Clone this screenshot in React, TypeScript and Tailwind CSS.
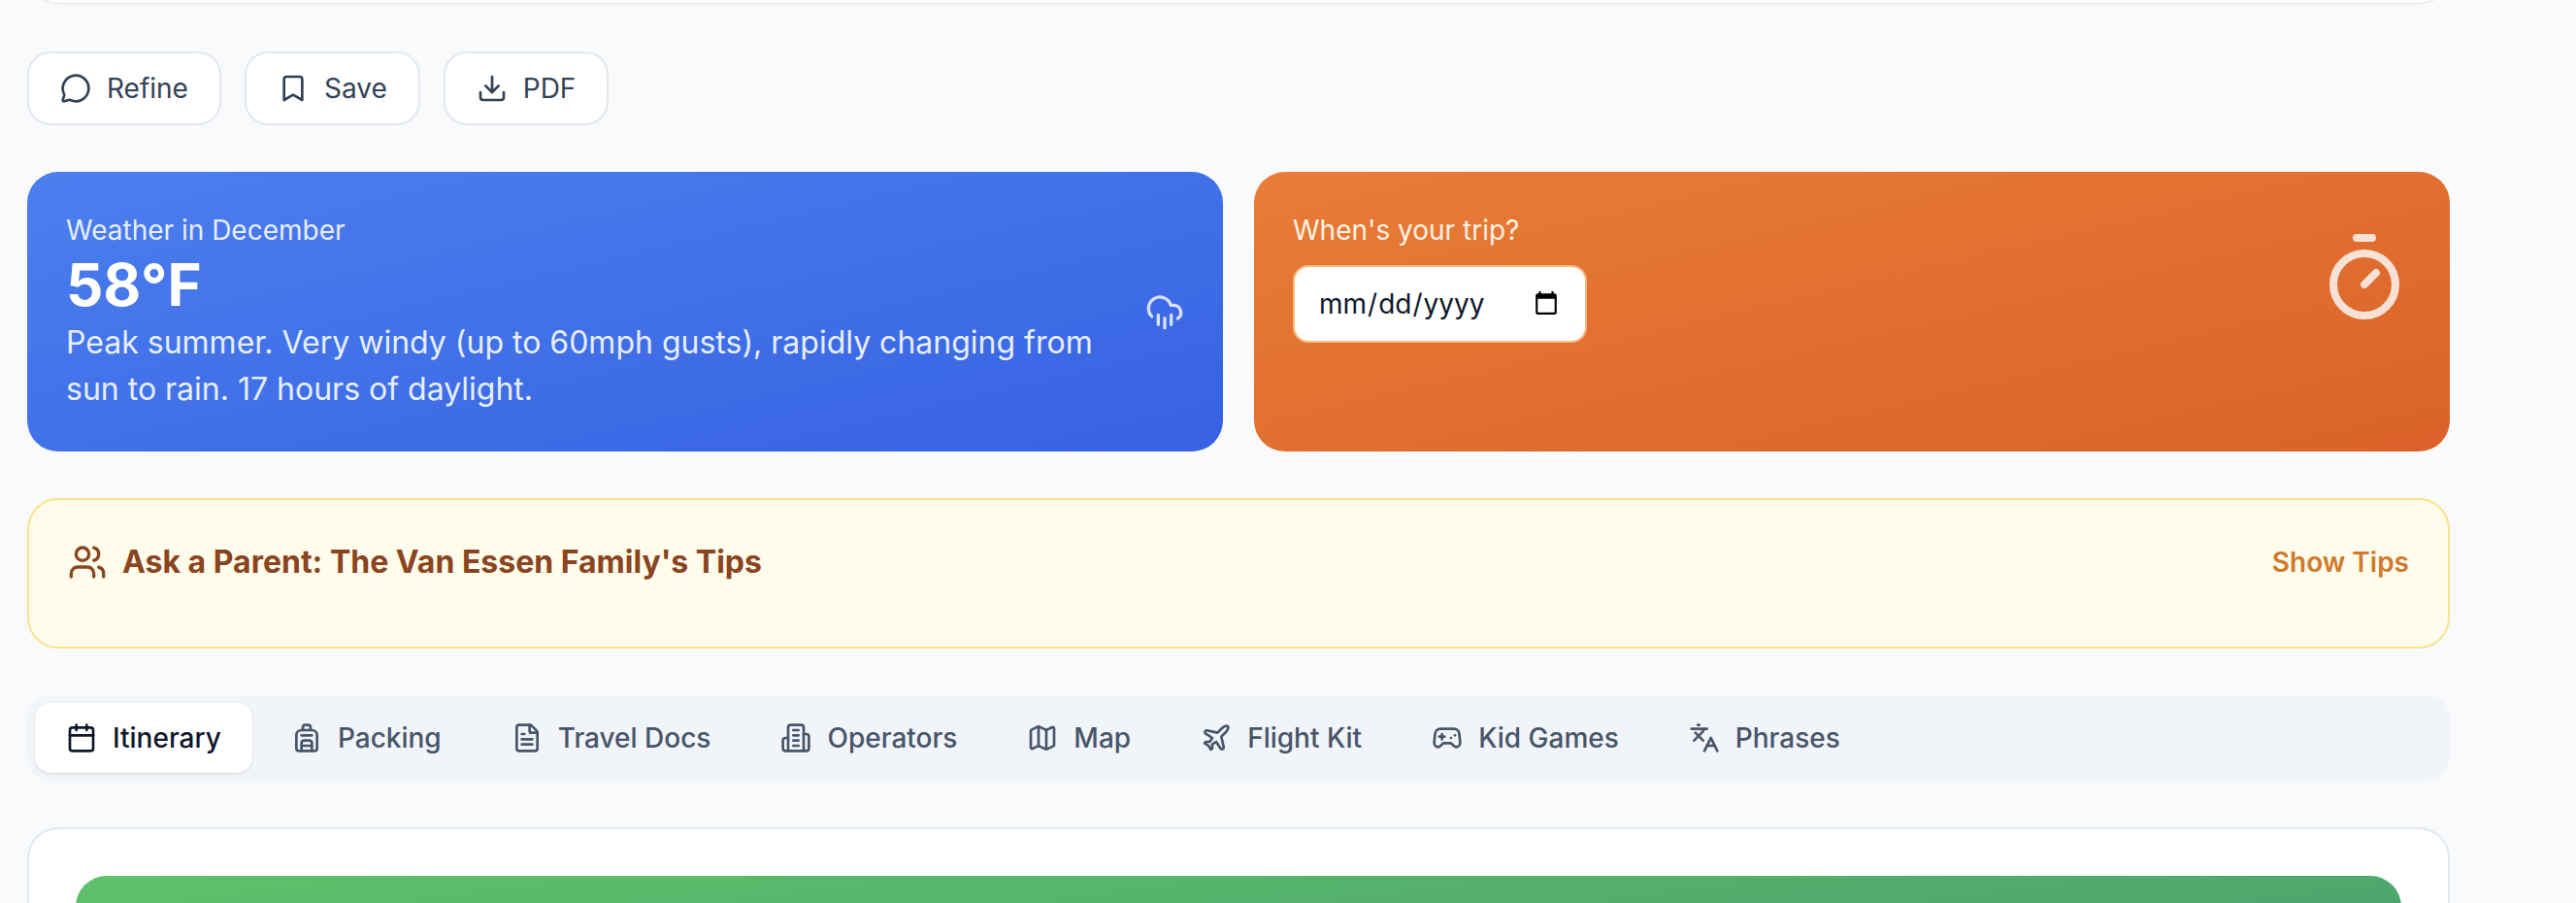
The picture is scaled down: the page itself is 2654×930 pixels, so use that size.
import { Backpack, Bookmark, Calendar, CloudRain, Download, FileText, Gamepad2, Languages, Map, MessageCircle, Plane, Timer, Users } from "lucide-react";

// the tower version of the building icon, lucide's current one is squatter
const Operators = ({ size }: { size: number }) => (
  <svg width={size} height={size} viewBox="0 0 24 24" fill="none" stroke="currentColor" strokeWidth={2} strokeLinecap="round" strokeLinejoin="round">
    <path d="M6 22V4a2 2 0 0 1 2-2h8a2 2 0 0 1 2 2v18Z" />
    <path d="M6 12H4a2 2 0 0 0-2 2v6a2 2 0 0 0 2 2h2" />
    <path d="M18 9h2a2 2 0 0 1 2 2v9a2 2 0 0 1-2 2h-2" />
    <path d="M10 6h4" />
    <path d="M10 10h4" />
    <path d="M10 14h4" />
    <path d="M10 18h4" />
  </svg>
);

const actions = [
  { label: "Refine", icon: MessageCircle },
  { label: "Save", icon: Bookmark },
  { label: "PDF", icon: Download },
];

const tabs = [
  { label: "Itinerary", icon: Calendar },
  { label: "Packing", icon: Backpack },
  { label: "Travel Docs", icon: FileText },
  { label: "Operators", icon: Operators },
  { label: "Map", icon: Map },
  { label: "Flight Kit", icon: Plane },
  { label: "Kid Games", icon: Gamepad2 },
  { label: "Phrases", icon: Languages },
];

const App = () => {
  return (
    <div className="h-[930px] overflow-hidden bg-[#f9fafc] pl-7 font-['Inter',sans-serif]">
      <div className="flex w-[2496px] flex-col">
        {/* bottom edge of the card above, scrolled away */}
        <div className="-mx-4 h-[8px] overflow-hidden px-4">
          <div className="-mt-[77px] h-[80px] rounded-[32px] bg-white shadow-[0_1px_2px_rgba(15,23,42,0.12)]" />
        </div>

        <div className="mt-[45px] flex gap-6">
          {actions.map(({ label, icon: Icon }) => (
            <button
              key={label}
              className="flex h-[76px] items-center gap-4 rounded-3xl border-2 border-[#e2e8f0] bg-white px-8 text-[28px] text-[#334155]"
            >
              <Icon size={32} strokeWidth={2} />
              {label}
            </button>
          ))}
        </div>

        <div className="mt-12 grid grid-cols-2 gap-8">
          <div className="flex items-center justify-between gap-8 rounded-[32px] bg-gradient-to-br from-[#4c7fee] to-[#3761e2] p-10 text-white">
            <div>
              <p className="text-[28px] leading-10 text-[#e6eefd]">Weather in December</p>
              <p className="text-[60px] leading-[72px] font-bold">58°F</p>
              <p className="max-w-[1120px] text-[32px] leading-12 text-[#e6eefd]">
                Peak summer. Very windy (up to 60mph gusts), rapidly changing from sun to rain. 17 hours of daylight.
              </p>
            </div>
            <CloudRain size={40} className="shrink-0 text-white/80" />
          </div>

          <div className="rounded-[32px] bg-gradient-to-br from-[#e97c36] to-[#da622a] p-10 text-white">
            <div className="flex items-center justify-between">
              <div>
                <p className="text-[28px] leading-10 text-[#fff3e3]">When's your trip?</p>
                <input
                  type="date"
                  className="mt-4 h-20 w-[303px] rounded-2xl border-2 border-[#f8bb7c] bg-white px-6 text-[28px] text-[#0f172a]"
                />
              </div>
              <Timer size={96} className="text-white/80" />
            </div>
          </div>
        </div>

        <div className="mt-12 flex h-[155px] items-start justify-between rounded-[32px] border-2 border-[#fbe28f] bg-[#fffcec] p-10">
          <div className="flex items-center gap-4">
            <Users size={40} className="text-[#8a4520]" />
            <h3 className="text-[32px] leading-12 font-bold text-[#8a4520]">Ask a Parent: The Van Essen Family's Tips</h3>
          </div>
          <button className="text-[28px] leading-12 font-semibold text-[#cf7a2d]">Show Tips</button>
        </div>

        <div className="mt-12 flex gap-2 rounded-3xl bg-[#f1f4f9] p-2">
          {tabs.map(({ label, icon: Icon }, i) => (
            <div
              key={label}
              className={
                i === 0
                  ? "flex h-[72px] items-center gap-4 rounded-2xl bg-white px-8 text-[28px] font-medium text-[#0f172a] shadow-sm"
                  : "flex h-[72px] items-center gap-4 rounded-2xl px-8 text-[28px] font-medium text-[#475569]"
              }
            >
              <Icon size={32} />
              {label}
            </div>
          ))}
        </div>

        <div className="mt-12 rounded-[32px] border-2 border-[#e2e8f0] bg-white p-12">
          <div className="h-[300px] rounded-[32px] bg-gradient-to-br from-[#5fc16b] to-[#3f8f6b]" />
        </div>
      </div>
    </div>
  );
};

export default App;
